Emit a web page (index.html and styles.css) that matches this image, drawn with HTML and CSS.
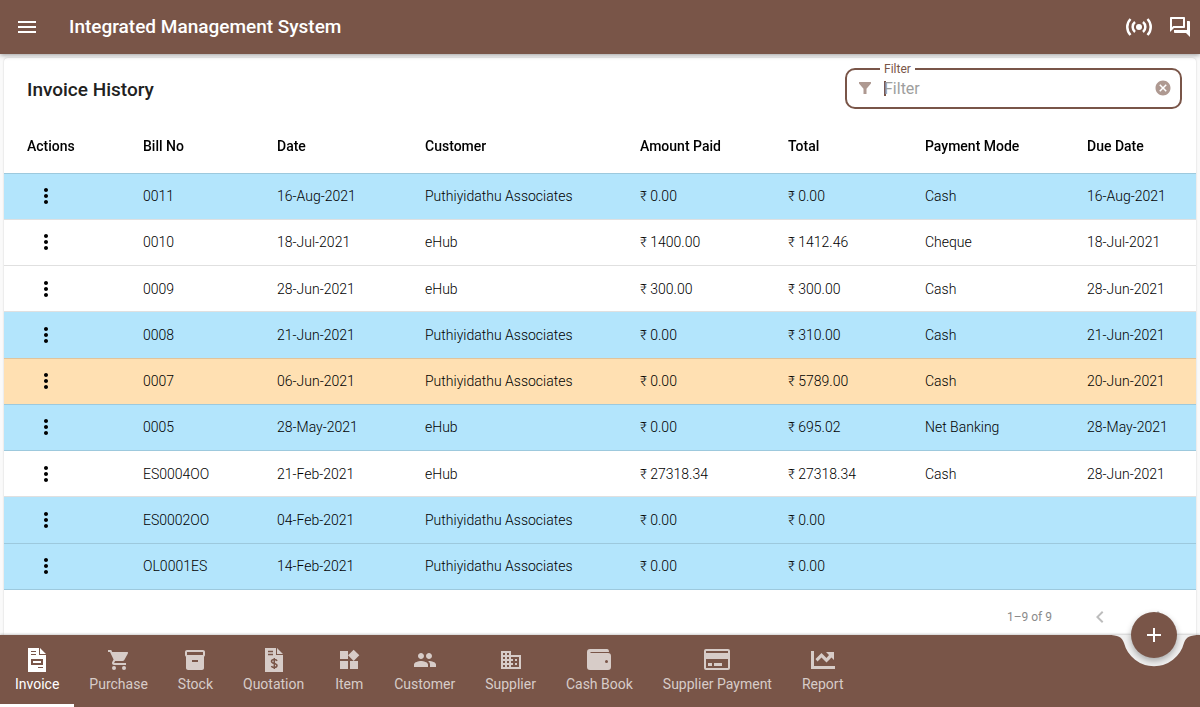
FILE: index.html
```
<!DOCTYPE html>
<html lang="en">
<head>
	<meta charset="utf-8">
	<title>Integrated Management System</title>
	<link rel="stylesheet" href="styles.css">
</head>
<body>
<header class="app-bar">
  <button class="icon-btn" aria-label="Open menu">
    <svg width="24" height="24" viewBox="0 0 24 24"><path d="M3 18h18v-2H3v2zm0-5h18v-2H3v2zm0-7v2h18V6H3z"/></svg>
  </button>
  <h1>Integrated Management System</h1>
  <button class="icon-btn" aria-label="Broadcast">
    <svg width="26" height="24" viewBox="0 0 26 24"><circle cx="13" cy="12" r="3"/><path class="wave" d="M9 7a6.500 6.500 0 0 0 0 10M17 7a6.500 6.500 0 0 1 0 10M4.500 4a11.500 11.500 0 0 0 0 16M21.500 4a11.500 11.500 0 0 1 0 16"/></svg>
  </button>
  <button class="icon-btn" aria-label="Messages">
    <svg width="24" height="24" viewBox="0 0 24 24"><path d="M15 4v7H5.170L4 12.170V4h11m1-2H3c-.550 0-1 .450-1 1v14l4-4h10c.550 0 1-.450 1-1V3c0-.550-.450-1-1-1zm5 4h-2v9H6v2c0 .550.450 1 1 1h11l4 4V7c0-.550-.450-1-1-1z"/></svg>
  </button>
</header>

<main class="page">
  <section class="card">
    <div class="card-head">
      <h2>Invoice History</h2>
      <fieldset class="filter">
        <legend><label for="filter">Filter</label></legend>
        <div class="filter-row">
          <svg width="18" height="18" viewBox="0 0 24 24"><path d="M4 4h16v2l-6 7v7h-4v-7L4 6z"/></svg>
          <input type="text" id="filter" placeholder="Filter" autofocus>
          <button class="clear-btn" aria-label="Clear filter">
            <svg width="18" height="18" viewBox="0 0 24 24"><path d="M12 2C6.470 2 2 6.470 2 12s4.470 10 10 10 10-4.470 10-10S17.530 2 12 2zm5 13.590L15.590 17 12 13.410 8.410 17 7 15.590 10.590 12 7 8.410 8.410 7 12 10.590 15.590 7 17 8.410 13.410 12 17 15.590z"/></svg>
          </button>
        </div>
      </fieldset>
    </div>

    <table class="invoices">
      <thead>
        <tr>
          <th class="col-actions">Actions</th>
          <th class="col-bill">Bill No</th>
          <th class="col-date">Date</th>
          <th class="col-customer">Customer</th>
          <th class="col-paid">Amount Paid</th>
          <th class="col-total">Total</th>
          <th class="col-mode">Payment Mode</th>
          <th class="col-due">Due Date</th>
        </tr>
      </thead>
      <tbody id="invoice-rows"></tbody>
    </table>

    <div class="pager">
      <span>1–9 of 9</span>
      <button class="page-btn" aria-label="Previous page" disabled>
        <svg width="24" height="24" viewBox="0 0 24 24"><path d="M15.400 7.400L14 6l-6 6 6 6 1.400-1.400L10.800 12z"/></svg>
      </button>
      <button class="page-btn" aria-label="Next page" disabled>
        <svg width="24" height="24" viewBox="0 0 24 24"><path d="M10 6L8.600 7.400l4.600 4.600-4.600 4.600L10 18l6-6z"/></svg>
      </button>
    </div>
  </section>
</main>

<footer class="bottom-bar">
  <nav class="tabs">
    <a class="tab active" href="#invoice">
      <svg width="24" height="24" viewBox="0 0 24 24"><path fill-rule="evenodd" d="M3 0h11v7h7v17H3zM6 3v1h5V3zm0 3v1h5V6zm0 5v6h12v-6zm2 2h8v2H8zm5 6v1h5v-1zM15 0l6 6h-6z"/></svg>
      Invoice
    </a>
    <a class="tab" href="#purchase">
      <svg width="24" height="24" viewBox="0 0 24 24"><path d="M1 2v2h2l3.600 7.590-1.350 2.450c-.160.280-.250.610-.250.960 0 1.100.900 2 2 2h12v-2H7.420c-.140 0-.250-.110-.250-.250l.030-.120.900-1.630h7.450c.750 0 1.410-.410 1.750-1.030l3.580-6.490A1 1 0 0 0 20 4H5.210l-.940-2z"/><circle cx="7" cy="20" r="2"/><circle cx="17" cy="20" r="2"/></svg>
      Purchase
    </a>
    <a class="tab" href="#stock">
      <svg width="24" height="24" viewBox="0 0 24 24"><path fill-rule="evenodd" d="M4 2h16c1 0 2 .800 2 2v3c0 .700-.400 1.300-1 1.700V20c0 1.100-1 2-2 2H5c-1 0-2-.900-2-2V8.700C2.400 8.300 2 7.700 2 7V4c0-1.200 1-2 2-2zm0 2v3h16V4zm5 8v2h6v-2z"/></svg>
      Stock
    </a>
    <a class="tab" href="#quotation">
      <svg width="24" height="24" viewBox="0 0 24 24"><path d="M3 0h11v7h7v17H3zM15 0l6 6h-6z"/><path class="cut" d="M6 3.500h5M6 6.500h5M15 13c-.500-2-5.500-2-5.500.500 0 2.500 5.500 1.500 5.500 4s-5 2.500-5.500.500M12.300 10v11"/></svg>
      Quotation
    </a>
    <a class="tab" href="#item">
      <svg width="24" height="24" viewBox="0 0 24 24"><path d="M13 13v8h8v-8h-8zM3 21h8v-8H3v8zM3 3v8h8V3H3zm13.660-1.310L11 7.340 16.660 13l5.660-5.660-5.660-5.650z"/></svg>
      Item
    </a>
    <a class="tab" href="#customer">
      <svg width="24" height="24" viewBox="0 0 24 24"><path d="M16 11c1.660 0 2.990-1.340 2.990-3S17.660 5 16 5s-3 1.340-3 3 1.340 3 3 3zm-8 0c1.660 0 2.990-1.340 2.990-3S9.660 5 8 5 5 6.340 5 8s1.340 3 3 3zm0 2c-2.330 0-7 1.170-7 3.500V19h14v-2.500c0-2.330-4.670-3.500-7-3.500zm8 0c-.290 0-.620.020-.970.050 1.160.840 1.970 1.970 1.970 3.450V19h6v-2.500c0-2.330-4.670-3.500-7-3.500z"/></svg>
      Customer
    </a>
    <a class="tab" href="#supplier">
      <svg width="24" height="24" viewBox="0 0 24 24"><path d="M12 7V3H2v18h20V7H12zM6 19H4v-2h2v2zm0-4H4v-2h2v2zm0-4H4V9h2v2zm0-4H4V5h2v2zm4 12H8v-2h2v2zm0-4H8v-2h2v2zm0-4H8V9h2v2zm0-4H8V5h2v2zm10 12h-8v-2h2v-2h-2v-2h2v-2h-2V9h8v10zm-2-8h-2v2h2v-2zm0 4h-2v2h2v-2z"/></svg>
      Supplier
    </a>
    <a class="tab" href="#cash-book">
      <svg width="24" height="24" viewBox="0 0 24 24"><path fill-rule="evenodd" d="M3 1h17q2 0 2 3H3.500v1H21q3 0 3 3v11q0 3-3 3H3q-3 0-3-3V4q0-3 3-3zm16.500 11a1.500 1.500 0 1 0 0 3 1.500 1.500 0 0 0 0-3z"/></svg>
      Cash Book
    </a>
    <a class="tab" href="#supplier-payment">
      <svg width="28" height="24" viewBox="0 0 28 24"><path fill-rule="evenodd" d="M3 1h22q2 0 2 2v17q0 2-2 2H3q-2 0-2-2V3q0-2 2-2zm0 2v2h22V3zm0 8v9h22v-9zm2 4h4v3H5zm6 0h8v3h-8z"/></svg>
      Supplier Payment
    </a>
    <a class="tab" href="#report">
      <svg width="24" height="24" viewBox="0 0 24 24"><path d="M0 3h3v15h21v3H0z"/><path d="M15 4h8v8l-2.500-2.500-5 5-5-5-4 4-2-2.500 6-6 5 5 2.500-3z"/></svg>
      Report
    </a>
  </nav>
  <div class="fab-dock">
    <svg class="notch" width="92" height="32" viewBox="0 0 92 32"><path d="M0 0C10 0 14 2 16 8A31 31 0 0 0 76 8C78 2 82 0 92 0z"/></svg>
    <button class="fab" aria-label="Add invoice">
      <svg width="24" height="24" viewBox="0 0 24 24"><path d="M19 13h-6v6h-2v-6H5v-2h6V5h2v6h6v2z"/></svg>
    </button>
  </div>
</footer>
<script src="script.js"></script>
</body>
</html>
```
FILE: styles.css
```
* {
  box-sizing: border-box;
}

body {
  margin: 0;
  min-height: 100vh;
  display: flex;
  flex-direction: column;
  background-color: #fafafa;
  font-family: Roboto, sans-serif;
  font-size: 14px;
  color: #212121;
}

button {
  border: 0;
  padding: 0;
  background: none;
  color: inherit;
}

svg {
  display: block;
  fill: currentColor;
}

.app-bar {
  position: relative;
  display: flex;
  align-items: center;
  gap: 16px;
  height: 54px;
  padding: 0 8px 0 15px;
  background-color: #795548;
  color: white;
  box-shadow: 0 1px 5px rgba(0, 0, 0, 0.4);
}

.app-bar h1 {
  flex: 1;
  margin: 0 0 0 14px;
  font-size: 19px;
  line-height: 24px;
  font-weight: 500;
}

.wave {
  fill: none;
  stroke: currentColor;
  stroke-width: 2.500;
}

.page {
  flex: 1;
  display: flex;
  padding: 4px 4px 0;
}

.card {
  flex: 1;
  background-color: white;
  border-radius: 4px 4px 0 0;
  box-shadow: 0 0 2px rgba(0, 0, 0, 0.2);
}

.card-head {
  display: flex;
  justify-content: space-between;
  align-items: flex-start;
  height: 62px;
  padding: 3px 14px 0 23px;
}

h2 {
  margin: 17px 0 0;
  font-size: 19px;
  line-height: 24px;
  font-weight: 500;
}

.filter {
  width: 337px;
  height: 48px;
  margin: 0;
  padding: 0 8px 0 9px;
  border: 2px solid #795548;
  border-radius: 10px;
  color: #795548;
}

.filter legend {
  margin-left: 24px;
  padding: 0 4px;
  font-size: 12px;
  line-height: 16px;
}

.filter-row {
  display: flex;
  align-items: center;
  gap: 10px;
  height: 22px;
}

.filter-row svg {
  opacity: 0.6;
}

.filter input {
  flex: 1;
  min-width: 0;
  padding: 0;
  border: 0;
  outline: 0;
  background: none;
  font-family: inherit;
  font-size: 16px;
  caret-color: #795548;
}

.filter input::placeholder {
  color: #9e9e9e;
}

/* steady cursor while the box is empty */
.filter input:focus:placeholder-shown {
  caret-color: transparent;
  background: linear-gradient(#795548, #795548) left center / 2px 15px no-repeat;
}

.invoices {
  width: 100%;
  height: 470px;
  table-layout: fixed;
  border-collapse: collapse;
}

.invoices th,
.invoices td {
  padding: 0 0 0 23px;
  border-bottom: 1px solid rgba(0, 0, 0, 0.12);
  text-align: left;
  white-space: nowrap;
}

.invoices th {
  height: 53px;
  font-weight: 500;
  color: black;
}

.invoices td {
  font-weight: 300;
  color: black;
}

.col-actions { width: 116px; }
.col-bill { width: 134px; }
.col-date { width: 148px; }
.col-customer { width: 215px; }
.col-paid { width: 148px; }
.col-total { width: 137px; }
.col-mode { width: 162px; }
.col-due { width: 132px; }

.unpaid {
  background-color: #b3e5fc;
}

.overdue {
  background-color: #ffe0b2;
}

.more-btn {
  display: block;
  margin-left: 7px;
}

.pager {
  display: flex;
  align-items: center;
  justify-content: flex-end;
  gap: 36px;
  height: 45px;
  padding: 8px 24px 0 0;
  font-size: 12px;
  color: #8a8a8a;
}

.page-btn {
  color: #bdbdbd;
}

.bottom-bar {
  position: relative;
  height: 72px;
  background-color: #795548;
  box-shadow: 0 -1px 2px rgba(0, 0, 0, 0.2);
}

.tabs {
  display: flex;
  height: 100%;
}

.tab {
  display: flex;
  flex-direction: column;
  align-items: center;
  gap: 4px;
  min-width: 60px;
  padding: 13px 15px 0;
  border-bottom: 3px solid transparent;
  line-height: 16px;
  white-space: nowrap;
  color: #d7ccc8;
  text-decoration: none;
}

.tab.active {
  border-bottom-color: white;
  color: white;
}

.cut {
  fill: none;
  stroke: #795548;
  stroke-width: 1.500;
}

/* the add button hangs in a notch cut from the bar */
.fab-dock {
  position: absolute;
  top: 0;
  right: 0;
  width: 92px;
}

.notch {
  fill: #f0f0f0;
}

.fab {
  position: absolute;
  top: -23px;
  left: 23px;
  display: flex;
  align-items: center;
  justify-content: center;
  width: 46px;
  height: 46px;
  border-radius: 50%;
  background-color: #795548;
  color: white;
  box-shadow: 0 3px 6px rgba(0, 0, 0, 0.3);
}
```
FILE: script.js
```
const invoices = [
  ["0011", "16-Aug-2021", "Puthiyidathu Associates", "₹ 0.00", "₹ 0.00", "Cash", "16-Aug-2021", "unpaid"],
  ["0010", "18-Jul-2021", "eHub", "₹ 1400.00", "₹ 1412.46", "Cheque", "18-Jul-2021", ""],
  ["0009", "28-Jun-2021", "eHub", "₹ 300.00", "₹ 300.00", "Cash", "28-Jun-2021", ""],
  ["0008", "21-Jun-2021", "Puthiyidathu Associates", "₹ 0.00", "₹ 310.00", "Cash", "21-Jun-2021", "unpaid"],
  ["0007", "06-Jun-2021", "Puthiyidathu Associates", "₹ 0.00", "₹ 5789.00", "Cash", "20-Jun-2021", "overdue"],
  ["0005", "28-May-2021", "eHub", "₹ 0.00", "₹ 695.02", "Net Banking", "28-May-2021", "unpaid"],
  ["ES0004OO", "21-Feb-2021", "eHub", "₹ 27318.34", "₹ 27318.34", "Cash", "28-Jun-2021", ""],
  ["ES0002OO", "04-Feb-2021", "Puthiyidathu Associates", "₹ 0.00", "₹ 0.00", "", "", "unpaid"],
  ["OL0001ES", "14-Feb-2021", "Puthiyidathu Associates", "₹ 0.00", "₹ 0.00", "", "", "unpaid"]
];

const moreButton = `<button class="more-btn" aria-label="Invoice actions">
  <svg width="24" height="24" viewBox="0 0 24 24"><path d="M12 8c1.100 0 2-.900 2-2s-.900-2-2-2-2 .900-2 2 .900 2 2 2zm0 2c-1.100 0-2 .900-2 2s.900 2 2 2 2-.900 2-2-.900-2-2-2zm0 6c-1.100 0-2 .900-2 2s.900 2 2 2 2-.900 2-2-.900-2-2-2z"/></svg>
</button>`;

document.getElementById("invoice-rows").innerHTML = invoices.map(row => {
  const status = row[row.length - 1];
  const cells = row.slice(0, -1).map(text => `<td>${text}</td>`).join("");
  return `<tr class="${status}"><td>${moreButton}</td>${cells}</tr>`;
}).join("");

document.getElementById("filter").focus();
```
